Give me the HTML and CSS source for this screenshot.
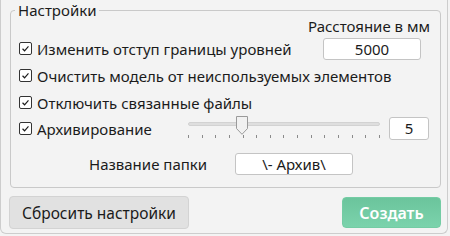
FILE: index.html
```html
<!DOCTYPE html>
<html lang="ru">
<head>
  <meta charset="UTF-8">
  <title>Настройки</title>
  <link rel="stylesheet" href="styles.css">
</head>
<body>
  <div class="window">
    <div class="group">
      <div class="group-title">Настройки</div>

      <div class="dist-label">Расстояние в мм</div>

      <div class="row">
        <label class="check"><span class="box"><svg viewBox="0 0 13 13"><path d="M3 6.8 L5.4 9.2 L10 4"/></svg></span>Изменить отступ границы уровней</label>
        <div class="field field-dist">5000</div>
      </div>
      <div class="row">
        <label class="check"><span class="box"><svg viewBox="0 0 13 13"><path d="M3 6.8 L5.4 9.2 L10 4"/></svg></span>Очистить модель от неиспользуемых элементов</label>
      </div>
      <div class="row">
        <label class="check"><span class="box"><svg viewBox="0 0 13 13"><path d="M3 6.8 L5.4 9.2 L10 4"/></svg></span>Отключить связанные файлы</label>
      </div>
      <div class="row row-archive">
        <label class="check check-archive"><span class="box"><svg viewBox="0 0 13 13"><path d="M3 6.8 L5.4 9.2 L10 4"/></svg></span>Архивирование</label>
        <div class="slider">
          <div class="track"></div>
          <svg class="thumb" viewBox="0 0 12 19"><path d="M0.5 0.5 H11.5 V12.5 L6 18.3 L0.5 12.5 Z"/></svg>
          <div class="ticks">
            <span></span><span></span><span></span><span></span><span></span>
            <span></span><span></span><span></span><span></span><span></span>
            <span></span><span></span><span></span><span></span><span></span>
          </div>
        </div>
        <div class="field field-num">5</div>
      </div>
      <div class="row row-folder">
        <span class="folder-label">Название папки</span>
        <div class="field field-folder">\- Архив\</div>
      </div>
    </div>

    <div class="actions">
      <button class="btn btn-reset">Сбросить настройки</button>
      <button class="btn btn-create">Создать</button>
    </div>
  </div>
</body>
</html>
```

FILE: styles.css
```css
* {
  margin: 0;
  padding: 0;
  box-sizing: border-box;
}

body {
  font-family: "Noto Sans", "Open Sans", sans-serif;
  font-size: 15px;
  color: #1b1b1b;
  background: #f3f3f3;
}

.window {
  width: 448px;
  height: 234px;
  border: 1px solid #cdcdcd;
  border-top: none;
  border-radius: 0 0 6px 6px;
  padding-top: 10px;
}

.group {
  position: relative;
  margin: 0 6px 0 9px;
  height: 178px;
  border: 1px solid #c9c9c9;
  border-radius: 4px;
  padding: 0 10px 0 8px;
}

.group-title {
  position: absolute;
  top: -11px;
  left: 4px;
  padding: 0 3px;
  background: #f3f3f3;
  line-height: 20px;
}

.dist-label {
  text-align: right;
  line-height: 18px;
  margin-top: 6px;
}

.row {
  display: flex;
  align-items: center;
  height: 27px;
}

.check {
  display: flex;
  align-items: center;
  gap: 5px;
  white-space: nowrap;
}

.box {
  width: 13px;
  height: 13px;
  border: 1px solid #333;
  border-radius: 2px;
  background: #fff;
  display: flex;
}

.box svg {
  width: 11px;
  height: 11px;
  fill: none;
  stroke: #1b1b1b;
  stroke-width: 1.4;
}

.field {
  background: #fff;
  border: 1px solid #c4c4c4;
  border-radius: 3px;
  text-align: center;
  height: 22px;
  line-height: 20px;
}

.field-dist {
  width: 98px;
  margin-left: auto;
  margin-right: 9px;
}

.row-archive {
  margin-top: -1px;
}

.check-archive {
  width: 163px;
}

.slider {
  position: relative;
  width: 192px;
  height: 26px;
  margin-left: 6px;
}

.track {
  position: absolute;
  left: 0;
  right: 0;
  top: 6px;
  height: 4px;
  background: #dedede;
  border: 1px solid #d2d2d2;
  border-radius: 2px;
}

.thumb {
  position: absolute;
  left: 48px;
  top: 0;
  width: 12px;
  height: 19px;
  fill: #f1f1f1;
  stroke: #9a9a9a;
  stroke-width: 1;
}

.ticks {
  position: absolute;
  left: 0;
  right: 0;
  top: 19px;
  display: flex;
  justify-content: space-between;
}

.ticks span {
  width: 1px;
  height: 3px;
  background: #8a8a8a;
}

.field-num {
  width: 40px;
  margin-left: 9px;
  height: 23px;
}

.row-folder {
  margin-top: 8px;
  padding-left: 70px;
}

.folder-label {
  width: 146px;
}

.field-folder {
  width: 118px;
}

.actions {
  display: flex;
  justify-content: space-between;
  align-items: center;
  padding: 8px 6px 0 8px;
}

.btn {
  font-family: inherit;
  font-size: 15.5px;
  border-radius: 4px;
  cursor: pointer;
}

.btn-reset {
  width: 180px;
  height: 33px;
  background: #e1e1e1;
  border: 1px solid #d3d3d3;
  color: #1b1b1b;
}

.btn-create {
  width: 99px;
  height: 31px;
  background: linear-gradient(#6bc49c, #7bd3ac);
  border: 1px solid #74cca4;
  color: #fff;
  font-weight: 600;
  font-size: 16px;
}
```
